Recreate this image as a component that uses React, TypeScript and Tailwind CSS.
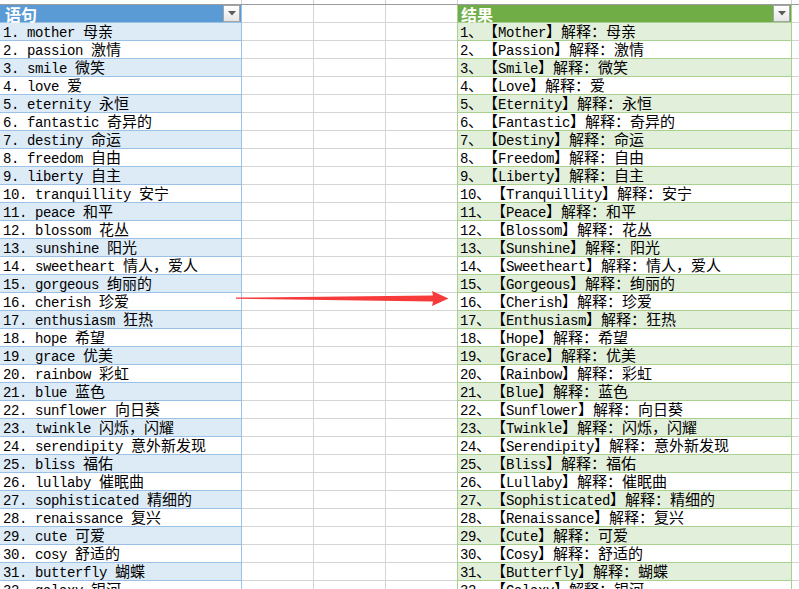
import React from "react"

const words: [string, string][] = [
  ["mother", "母亲"],
  ["passion", "激情"],
  ["smile", "微笑"],
  ["love", "爱"],
  ["eternity", "永恒"],
  ["fantastic", "奇异的"],
  ["destiny", "命运"],
  ["freedom", "自由"],
  ["liberty", "自主"],
  ["tranquillity", "安宁"],
  ["peace", "和平"],
  ["blossom", "花丛"],
  ["sunshine", "阳光"],
  ["sweetheart", "情人，爱人"],
  ["gorgeous", "绚丽的"],
  ["cherish", "珍爱"],
  ["enthusiasm", "狂热"],
  ["hope", "希望"],
  ["grace", "优美"],
  ["rainbow", "彩虹"],
  ["blue", "蓝色"],
  ["sunflower", "向日葵"],
  ["twinkle", "闪烁，闪耀"],
  ["serendipity", "意外新发现"],
  ["bliss", "福佑"],
  ["lullaby", "催眠曲"],
  ["sophisticated", "精细的"],
  ["renaissance", "复兴"],
  ["cute", "可爱"],
  ["cosy", "舒适的"],
  ["butterfly", "蝴蝶"],
  ["galaxy", "银河"],
]

// latin glyphs 8px wide, CJK glyphs 15px wide, like SimSun in the sheet
const Mixed = ({ text }: { text: string }) => {
  const parts = text.split(/([\u3000-\u303f\u4e00-\u9fff\uff00-\uffef]+)/)
  return (
    <span className="whitespace-pre leading-none [text-spacing-trim:space-all]">
      {parts.map((p, i) =>
        i % 2 === 1 ? (
          <span
            key={i}
            className="text-[15px] font-['Noto_Sans_CJK_SC',sans-serif] [text-spacing-trim:space-all]"
          >
            {p}
          </span>
        ) : (
          <span
            key={i}
            className="text-[14px] tracking-[-0.4px] font-['Liberation_Mono',monospace]"
          >
            {p}
          </span>
        )
      )}
    </span>
  )
}

const Dropdown = () => (
  <div className="ml-auto mr-px flex h-[17px] w-[17px] items-center justify-center border border-[#a3a3a3] bg-gradient-to-b from-white to-[#e6e6e6]">
    <svg width="8" height="5" viewBox="0 0 8 5">
      <polygon points="0,0 8,0 4,4.5" fill="#5a5a5a" />
    </svg>
  </div>
)

const cap = (s: string) => s[0].toUpperCase() + s.slice(1)

export default function App() {
  return (
    <div className="relative h-[589px] w-[799px] overflow-hidden bg-white text-black">
      {/* column header strip, mostly scrolled out of view */}
      <div className="flex h-[5px] border-b border-[#9c9c9c] bg-white">
        <div className="w-[242px] border-r border-[#d0d0d0]" />
        <div className="w-[72px] border-r border-[#d0d0d0]" />
        <div className="w-[72px] border-r border-[#d0d0d0]" />
        <div className="w-[71px]" />
        <div className="w-[335px] border-x border-[#d0d0d0]" />
        <div className="flex-1" />
      </div>

      {/* header row */}
      <div className="flex h-[18px]">
        <div className="flex w-[242px] items-center border-r border-b border-[#9bc2e6] bg-[#5b9bd5] pl-[5px]">
          <span className="text-[16px] font-bold text-white font-['Noto_Sans_CJK_SC',sans-serif] leading-none">
            语句
          </span>
          <Dropdown />
        </div>
        <div className="w-[72px] border-r border-b border-[#d4d4d4]" />
        <div className="w-[72px] border-r border-b border-[#d4d4d4]" />
        <div className="w-[71px] border-b border-[#d4d4d4]" />
        <div className="flex w-[335px] items-center border-x border-b border-[#a9d08e] bg-[#70ad47] pl-[3px]">
          <span className="text-[16px] font-bold text-white font-['Noto_Sans_CJK_SC',sans-serif] leading-none">
            结果
          </span>
          <Dropdown />
        </div>
        <div className="flex-1 border-b border-[#d4d4d4]" />
      </div>

      {words.map(([w, m], i) => {
        const n = i + 1
        const odd = n % 2 === 1
        return (
          <div key={n} className="flex h-[18px]">
            <div
              className={
                "flex w-[242px] items-center border-r border-b border-[#9bc2e6] pl-[3px] " +
                (odd ? "bg-[#ddebf7]" : "bg-white")
              }
            >
              <Mixed text={`${n}. ${w} ${m}`} />
            </div>
            <div className="w-[72px] border-r border-b border-[#d4d4d4]" />
            <div className="w-[72px] border-r border-b border-[#d4d4d4]" />
            <div className="w-[71px] border-b border-[#d4d4d4]" />
            <div
              className={
                "flex w-[335px] items-center border-x border-b border-[#a9d08e] pl-[2px] " +
                (odd ? "bg-[#e2efda]" : "bg-white")
              }
            >
              <Mixed text={`${n}、【${cap(w)}】解释：${m}`} />
            </div>
            <div className="flex-1 border-b border-[#d4d4d4]" />
          </div>
        )
      })}

      {/* red arrow drawn over the sheet */}
      <svg className="absolute left-0 top-0" width="799" height="589" viewBox="0 0 799 589">
        <polygon
          points="236,297.6 433,295.5 432,291 448.5,298.5 432,306 433,301.5 236,298.8"
          fill="#f73a3a"
        />
      </svg>
    </div>
  )
}
